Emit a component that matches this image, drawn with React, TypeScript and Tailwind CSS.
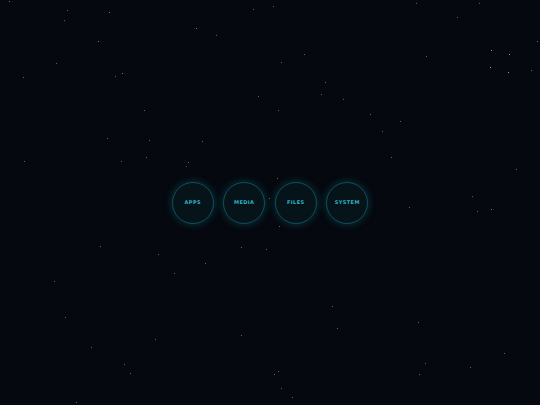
import React from 'react';

// star field: [x, y, brightness]
const stars: [number, number, number][] = [
  [9, 1, 0.6], [67, 10, 0.5], [109, 12, 0.6], [64, 20, 0.5], [196, 28, 0.6], [216, 35, 0.5],
  [253, 9, 0.5], [273, 6, 0.5], [416, 3, 0.5], [457, 17, 0.5], [479, 3, 0.5], [98, 41, 0.6],
  [56, 63, 0.5], [23, 77, 0.5], [115, 76, 0.5], [122, 73, 0.6], [281, 62, 0.5], [304, 54, 0.5],
  [325, 82, 0.5], [321, 94, 0.5], [343, 99, 0.5], [258, 96, 0.5], [278, 110, 0.5], [144, 110, 0.5],
  [370, 114, 0.5], [400, 121, 0.5], [382, 131, 0.5], [426, 56, 0.5], [491, 50, 0.8], [509, 54, 0.8],
  [490, 67, 0.8], [508, 72, 0.8], [531, 70, 0.5], [537, 41, 0.6], [107, 138, 0.5], [149, 140, 0.5],
  [202, 141, 0.5], [24, 161, 0.5], [121, 161, 0.5], [146, 157, 0.5], [188, 162, 0.5], [186, 166, 0.4],
  [391, 157, 0.5], [516, 169, 0.5], [277, 178, 0.5], [283, 188, 0.6], [269, 198, 0.5], [409, 207, 0.5],
  [472, 196, 0.5], [491, 209, 0.6], [477, 211, 0.5], [279, 226, 0.5], [100, 246, 0.5], [241, 247, 0.5],
  [266, 249, 0.5], [158, 254, 0.5], [205, 263, 0.5], [174, 273, 0.5], [54, 281, 0.5], [332, 306, 0.5],
  [65, 317, 0.5], [418, 322, 0.5], [337, 328, 0.5], [241, 335, 0.5], [155, 339, 0.5], [91, 347, 0.5],
  [504, 353, 0.5], [425, 363, 0.5], [124, 364, 0.5], [470, 367, 0.5], [130, 373, 0.5], [278, 371, 0.5],
  [274, 374, 0.5], [419, 374, 0.5], [281, 388, 0.5], [292, 397, 0.5], [76, 402, 0.5],
];

const items = ['APPS', 'MEDIA', 'FILES', 'SYSTEM'];

const Starfield: React.FC = () => (
  <svg className="absolute inset-0 w-full h-full" width={540} height={405} viewBox="0 0 540 405">
    {stars.map(([x, y, o], i) => (
      <rect key={i} x={x} y={y} width={1} height={1} fill="#8fd0e0" opacity={o} />
    ))}
  </svg>
);

export default function App() {
  return (
    <div className="relative w-[540px] h-[405px] bg-[#05080e] overflow-hidden flex items-center justify-center">
      <Starfield />
      <div className="relative flex items-center gap-[9.5px]">
        {items.map((label) => (
          <div
            key={label}
            className="w-[42px] h-[42px] rounded-full border border-[#0d4f5a] bg-[#06141a] shadow-[0_0_8px_rgba(20,150,170,0.35)] flex items-center justify-center"
          >
            <span className="text-[5px] font-bold tracking-[0.08em] text-[#2fb3c6] font-['DejaVu_Sans',sans-serif]">
              {label}
            </span>
          </div>
        ))}
      </div>
    </div>
  );
}
